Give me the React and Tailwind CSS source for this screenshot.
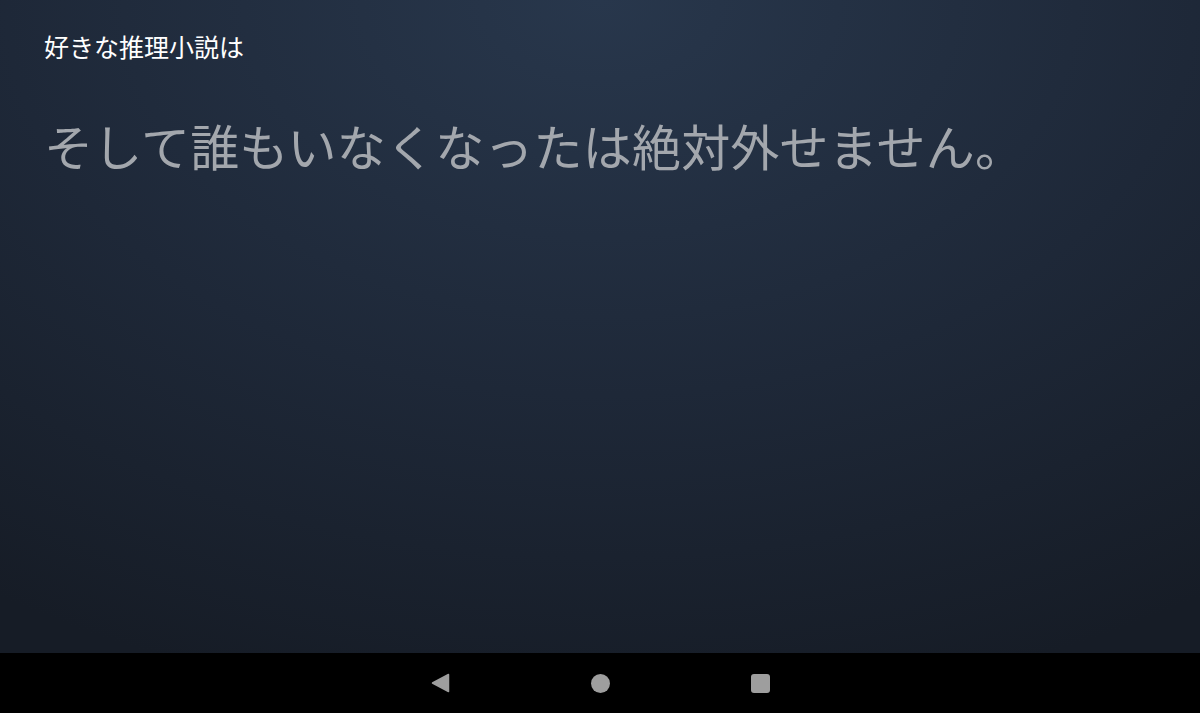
export default function App() {
  return (
    <div className="w-[1200px] h-[713px] flex flex-col overflow-hidden font-['Noto_Sans_CJK_JP',sans-serif]">
      <div className="flex-1 bg-[radial-gradient(ellipse_90%_110%_at_50%_0%,#28374c_0%,#1e2838_55%,#161c26_100%)] px-[44px] pt-[31px]">
        <div className="text-[25px] leading-[30px] text-white">好きな推理小説は</div>
        <div className="mt-[56px] text-[49px] leading-[56px] text-[#a3a7ad] tracking-[0.2px]">
          そして誰もいなくなったは絶対外せません。
        </div>
      </div>
      <div className="h-[60px] bg-black flex items-center justify-center">
        <div className="flex items-center gap-[141px]">
          <svg width="19" height="20" viewBox="0 0 19 20">
            <path d="M17.5 1.5 L17.5 18.5 L1.5 10 Z" fill="#9e9e9e" strokeLinejoin="round" stroke="#9e9e9e" strokeWidth="1.5" />
          </svg>
          <div className="w-[19px] h-[19px] rounded-full bg-[#9e9e9e]" />
          <div className="w-[19px] h-[19px] rounded-[3px] bg-[#9e9e9e]" />
        </div>
      </div>
    </div>
  );
}
